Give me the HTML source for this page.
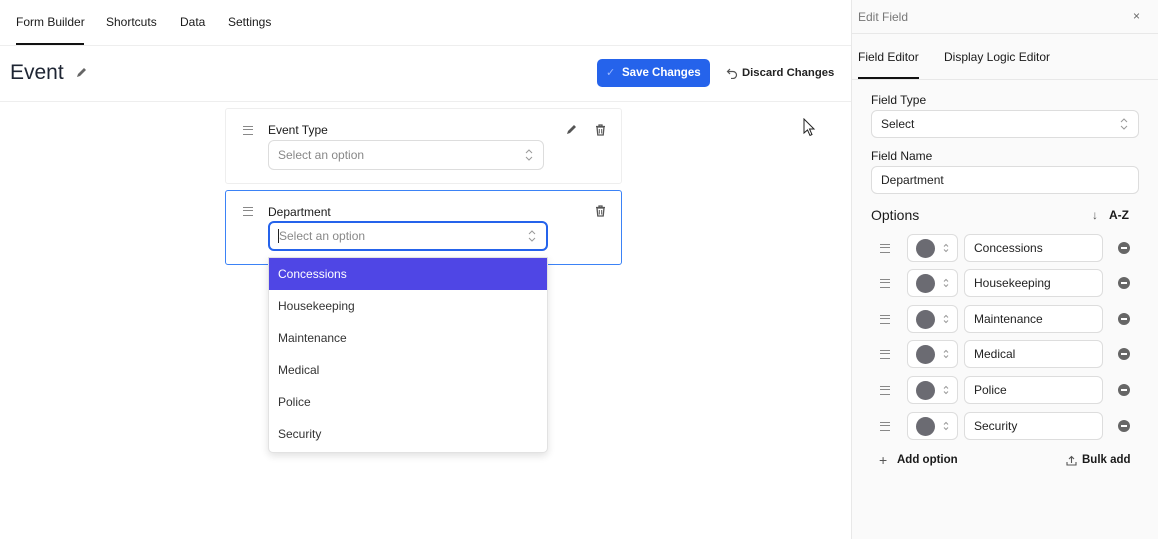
<!DOCTYPE html>
<html><head><style>
*{box-sizing:border-box;margin:0;padding:0}
body{width:1158px;height:539px;overflow:hidden;background:#fff;font-family:"Liberation Sans",sans-serif;color:#1a1a1a;position:relative;font-size:12px;white-space:nowrap}
.a{position:absolute}
.sel{position:absolute;border:1px solid #ddd;border-radius:6px;background:#fff;color:#777;font-size:12px;padding-left:9px;display:flex;align-items:center}
.chev{position:absolute;right:10px;top:50%;transform:translateY(-50%)}
.ham{position:absolute;width:10px;height:9px;border-top:1.5px solid #888;border-bottom:1.5px solid #888}
.ham:after{content:"";position:absolute;left:0;right:0;top:2px;border-top:1.5px solid #888}
.item{height:32px;line-height:32px;padding-left:9px;font-size:12px;color:#333}
</style></head><body>
<div class="a" style="left:16px;top:15px;font-size:12px">Form Builder</div>
<div class="a" style="left:106px;top:15px;font-size:12px">Shortcuts</div>
<div class="a" style="left:180px;top:15px;font-size:12px">Data</div>
<div class="a" style="left:228px;top:15px;font-size:12px">Settings</div>
<div class="a" style="left:16px;top:43px;width:68px;height:2px;background:#111"></div>
<div class="a" style="left:0;top:45px;width:851px;height:1px;background:#eee"></div>
<div class="a" style="left:10px;top:61px;font-size:21px;color:#1e2533">Event</div>
<svg class="a" style="left:76px;top:67px" width="11" height="11" viewBox="0 0 11 11"><path d="M1 10 L2 7 L8 1 L10 3 L4 9 Z" fill="#666"/></svg>
<div class="a" style="left:597px;top:59px;width:113px;height:28px;background:#2563eb;border-radius:5px;color:#fff;font-weight:bold;font-size:11.5px;line-height:28px;padding-left:25px">Save Changes</div>
<div class="a" style="left:606px;top:66px;color:#9bb8ff;font-size:11px">✓</div>
<svg class="a" style="left:726px;top:67px" width="12" height="12" viewBox="0 0 12 12"><path d="M4 2 L1.5 4.5 L4 7 M1.5 4.5 H7 A3.5 3.5 0 0 1 7 11.5 H5" fill="none" stroke="#555" stroke-width="1.2"/></svg>
<div class="a" style="left:742px;top:67px;font-weight:bold;font-size:11.3px;color:#222">Discard Changes</div>
<div class="a" style="left:0;top:101px;width:851px;height:1px;background:#eee"></div>
<div class="a" style="left:225px;top:108px;width:397px;height:76px;border:1px solid #eee;border-radius:3px"></div>
<div class="ham" style="left:243px;top:126px"></div>
<div class="a" style="left:268px;top:123px;font-size:12px">Event Type</div>
<svg class="a" style="left:566px;top:124px" width="11" height="11" viewBox="0 0 11 11"><path d="M1 10 L2 7 L8 1 L10 3 L4 9 Z" fill="#555"/></svg>
<svg class="a" style="left:595px;top:124px" width="11" height="12" viewBox="0 0 11 12"><path d="M1 2.5 H10 M4 2.5 V1 H7 V2.5 M2 3 L2.8 11 H8.2 L9 3 Z" fill="none" stroke="#555" stroke-width="1.3"/><path d="M4.3 5 V9.5 M6.7 5 V9.5" stroke="#555"/></svg>
<div class="sel" style="left:268px;top:140px;width:276px;height:30px;color:#888">Select an option<svg class="chev" width="8" height="12" viewBox="0 0 8 12"><path d="M1 4 L4 1 L7 4 M1 8 L4 11 L7 8" fill="none" stroke="#999" stroke-width="1"/></svg></div>
<div class="a" style="left:225px;top:190px;width:397px;height:75px;border:1px solid #3b82f6;border-radius:3px"></div>
<div class="ham" style="left:243px;top:207px"></div>
<div class="a" style="left:268px;top:205px;font-size:12px">Department</div>
<svg class="a" style="left:595px;top:205px" width="11" height="12" viewBox="0 0 11 12"><path d="M1 2.5 H10 M4 2.5 V1 H7 V2.5 M2 3 L2.8 11 H8.2 L9 3 Z" fill="none" stroke="#555" stroke-width="1.3"/><path d="M4.3 5 V9.5 M6.7 5 V9.5" stroke="#555"/></svg>
<div class="sel" style="left:268px;top:221px;width:280px;height:30px;border:2px solid #2563eb;color:#888">Select an option<svg class="chev" width="8" height="12" viewBox="0 0 8 12"><path d="M1 4 L4 1 L7 4 M1 8 L4 11 L7 8" fill="none" stroke="#999" stroke-width="1"/></svg></div>
<div class="a" style="left:278px;top:229px;width:1px;height:14px;background:#222"></div>
<div class="a" style="left:268px;top:257px;width:280px;height:196px;background:#fff;border:1px solid #e2e2e2;border-radius:0 0 5px 5px;box-shadow:0 3px 8px rgba(0,0,0,.12);overflow:hidden">
<div class="item" style="background:#4f46e5;color:#fff">Concessions</div>
<div class="item">Housekeeping</div><div class="item">Maintenance</div><div class="item">Medical</div><div class="item">Police</div><div class="item">Security</div>
</div>
<svg class="a" style="left:803px;top:118px" width="13" height="19" viewBox="0 0 13 19"><path d="M1 1 L1 15 L4.5 12 L7 17.5 L9 16.5 L6.5 11 L11 11 Z" fill="#fff" stroke="#222" stroke-width="1"/></svg>
<div class="a" style="left:851px;top:0;width:307px;height:539px;background:#fafafa;border-left:1px solid #e8e8e8">
<div class="a" style="left:6px;top:10px;color:#777;font-size:12px">Edit Field</div>
<div class="a" style="left:281px;top:9px;color:#666;font-size:12px">×</div>
<div class="a" style="left:0;top:33px;width:307px;height:1px;background:#e8e8e8"></div>
<div class="a" style="left:6px;top:50px;font-size:12px">Field Editor</div>
<div class="a" style="left:92px;top:50px;font-size:12px">Display Logic Editor</div>
<div class="a" style="left:6px;top:77px;width:61px;height:2px;background:#111"></div>
<div class="a" style="left:0;top:79px;width:307px;height:1px;background:#e8e8e8"></div>
<div class="a" style="left:19px;top:93px;font-size:12px">Field Type</div>
<div class="sel" style="left:19px;top:110px;width:268px;height:28px;color:#222">Select<svg class="chev" width="8" height="12" viewBox="0 0 8 12"><path d="M1 4 L4 1 L7 4 M1 8 L4 11 L7 8" fill="none" stroke="#999" stroke-width="1"/></svg></div>
<div class="a" style="left:19px;top:149px;font-size:12px">Field Name</div>
<div class="sel" style="left:19px;top:166px;width:268px;height:28px;color:#222">Department</div>
<div class="a" style="left:19px;top:207px;font-size:14px">Options</div>
<div class="a" style="left:240px;top:208px;font-size:12px;color:#555">↓</div>
<div class="a" style="left:257px;top:208px;font-size:12px;font-weight:bold">A-Z</div>
</div>
<div id="rows" class="a" style="left:850px;top:0"></div>
<script>
var names=["Concessions","Housekeeping","Maintenance","Medical","Police","Security"],ys=[248,283,319,354,390,426],h="";
for(var i=0;i<6;i++){var y=ys[i];
h+='<div class="ham" style="left:30px;top:'+(y-4)+'px"></div>'+
'<div class="sel" style="left:57px;top:'+(y-14)+'px;width:51px;height:28px;padding-left:8px"><div style="width:19px;height:19px;border-radius:50%;background:#6b6b72"></div><svg class="chev" style="right:8px" width="6" height="10" viewBox="0 0 6 10"><path d="M1 3.5 L3 1.5 L5 3.5 M1 6.5 L3 8.5 L5 6.5" fill="none" stroke="#999"/></svg></div>'+
'<div class="sel" style="left:114px;top:'+(y-14)+'px;width:139px;height:28px;color:#222">'+names[i]+'</div>'+
'<div class="a" style="left:268px;top:'+(y-6)+'px;width:12px;height:12px;border-radius:50%;background:#666"><div style="position:absolute;left:3px;top:5px;width:6px;height:2px;background:#fff"></div></div>';}
h+='<div class="a" style="left:29px;top:452px;font-size:14px;color:#555">+</div><div class="a" style="left:47px;top:454px;font-weight:bold;font-size:11.5px">Add option</div>';
h+='<svg class="a" style="left:216px;top:455px" width="11" height="11" viewBox="0 0 11 11"><path d="M5.5 8 V1.5 M3 4 L5.5 1.5 L8 4 M1 7 V10 H10 V7" fill="none" stroke="#555" stroke-width="1.1"/></svg><div class="a" style="left:232px;top:454px;font-weight:bold;font-size:11.5px">Bulk add</div>';
document.getElementById("rows").innerHTML=h;
</script>
</body></html>
